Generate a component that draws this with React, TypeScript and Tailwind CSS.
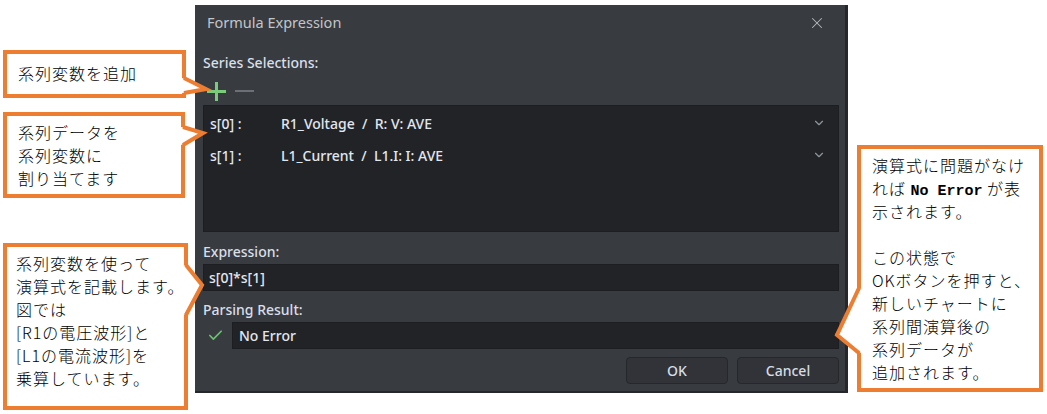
import { ChevronDown, X, Check } from "lucide-react";

const ORANGE = "#ed7d31";

function Note({ className, lines }: { className: string; lines: React.ReactNode[] }) {
  return (
    <div className={`bg-white border-4 border-[#ed7d31] text-[16px] leading-[23px] tracking-[1px] font-light text-black ${className}`}>
      {lines.map((l, i) => (
        <div key={i} className="h-[23px] whitespace-nowrap">{l}</div>
      ))}
    </div>
  );
}

function Tails() {
  // callout tails drawn over the boxes and the dialog edge
  const tails = [
    { fill: "182,78 208,89 182,93", line: "184,78 206,89 184,93" },
    { fill: "181,127 205,133 181,145", line: "183,127 203,133 183,145" },
    { fill: "184,265 204,285 184,315", line: "186,265 202,285 186,315" },
    { fill: "861,288 835,335 861,353", line: "859,288 837,335 859,353" },
  ];
  return (
    <svg className="absolute inset-0 pointer-events-none" width={1047} height={414}>
      {tails.map((t, i) => (
        <g key={i}>
          <polygon points={t.fill} fill="#ffffff" />
          <polyline points={t.line} fill="none" stroke={ORANGE} strokeWidth={4} strokeLinejoin="miter" />
        </g>
      ))}
    </svg>
  );
}

function SeriesRow({ id, name }: { id: string; name: string }) {
  return (
    <div className="h-[32px] flex items-center pl-[6px] pr-[12px] text-[14px] font-medium text-[#e1e7f0]">
      <div className="w-[71px]">{id}</div>
      <div className="flex-1 whitespace-pre">{name}</div>
      <ChevronDown size={14} strokeWidth={2} className="text-[#92969c]" />
    </div>
  );
}

export default function App() {
  const ui = { fontFamily: '"Noto Sans", "Open Sans", sans-serif' };
  const jp = { fontFamily: '"Noto Sans CJK JP", "Noto Sans", sans-serif' };

  return (
    <div className="relative w-[1047px] h-[414px] bg-white flex overflow-hidden">
      {/* left notes */}
      <div className="w-[195px] pl-[3px] flex flex-col" style={jp}>
        <Note className="mt-[50px] w-[183px] h-[48px] pl-[11px] pt-[8px]" lines={["系列変数を追加"]} />
        <Note
          className="mt-[14px] w-[182px] h-[86px] pl-[11px] pt-[5px]"
          lines={["系列データを", "系列変数に", "割り当てます"]}
        />
        <Note
          className="mt-[45px] w-[185px] h-[167px] pl-[9px] pt-[5px]"
          lines={[
            "系列変数を使って",
            "演算式を記載します。",
            "図では",
            "[R1の電圧波形]と",
            "[L1の電流波形]を",
            "乗算しています。",
          ]}
        />
      </div>

      {/* dialog */}
      <div
        className="mt-[5px] w-[653px] h-[388px] bg-[#383b40] border-r-[3px] border-b-2 border-[#25272a] flex flex-col"
        style={ui}
      >
        <div className="h-[35px] flex items-center justify-between pl-[12px] pr-[19px]">
          <span className="text-[14.5px] text-[#c3c5c9]">Formula Expression</span>
          <X size={18} strokeWidth={1.4} className="text-[#b4b7bc]" />
        </div>

        <div className="pl-[8px] pr-[6px] flex flex-col text-[14px] text-[#d9dfe8]">
          <div className="mt-[12px] h-[20px] flex items-center font-medium">Series Selections:</div>
          <div className="mt-[10px] h-[18px] flex items-center gap-[9px] pl-[4px]">
            <svg width={19} height={19} viewBox="0 0 19 19">
              <rect x={8} y={0} width={3} height={19} fill="#7acb7a" />
              <rect x={0} y={8} width={19} height={3} fill="#7acb7a" />
            </svg>
            <svg width={19} height={19} viewBox="0 0 19 19">
              <rect x={0} y={8} width={19} height={2} fill="#6c6f75" />
            </svg>
          </div>

          <div className="mt-[5px] h-[127px] bg-[#222326] border border-[#1d1e21] pt-[1px]">
            <SeriesRow id="s[0] :" name={"R1_Voltage  /  R: V: AVE"} />
            <SeriesRow id="s[1] :" name={"L1_Current  /  L1.I: I: AVE"} />
          </div>

          <div className="mt-[9px] h-[20px] flex items-center font-medium">Expression:</div>
          <div className="mt-[3px] h-[27px] bg-[#222326] border border-[#1d1e21] flex items-center pl-[5px] font-medium text-[#e1e7f0]">
            s[0]*s[1]
          </div>

          <div className="mt-[8px] h-[20px] flex items-center font-medium">Parsing Result:</div>
          <div className="mt-[3px] h-[27px] flex items-center">
            <div className="w-[29px] pl-[4px] flex items-center">
              <Check size={17} strokeWidth={2.4} className="text-[#6cc070]" />
            </div>
            <div className="flex-1 h-full bg-[#222326] border border-[#1d1e21] flex items-center pl-[6px] font-medium text-[#e1e7f0]">
              No Error
            </div>
          </div>

          <div className="mt-[8px] h-[27px] flex justify-end gap-[9px]">
            <button className="w-[102px] h-full rounded-[4px] bg-[#313338] border border-[#25272a] font-medium text-[#d6dce5]">OK</button>
            <button className="w-[102px] h-full rounded-[4px] bg-[#313338] border border-[#25272a] font-medium text-[#d6dce5]">Cancel</button>
          </div>
        </div>
      </div>

      {/* right note */}
      <div className="ml-[9px] mt-[145px]" style={jp}>
        <Note
          className="w-[186px] h-[247px] pl-[11px] pt-[5px]"
          lines={[
            "演算式に問題がなけ",
            <>
              れば <span className="font-bold text-[15px] tracking-[0px]" style={{ fontFamily: '"Liberation Mono", monospace' }}>No Error</span> が表
            </>,
            "示されます。",
            "",
            "この状態で",
            "OKボタンを押すと、",
            "新しいチャートに",
            "系列間演算後の",
            "系列データが",
            "追加されます。",
          ]}
        />
      </div>

      <Tails />
    </div>
  );
}
